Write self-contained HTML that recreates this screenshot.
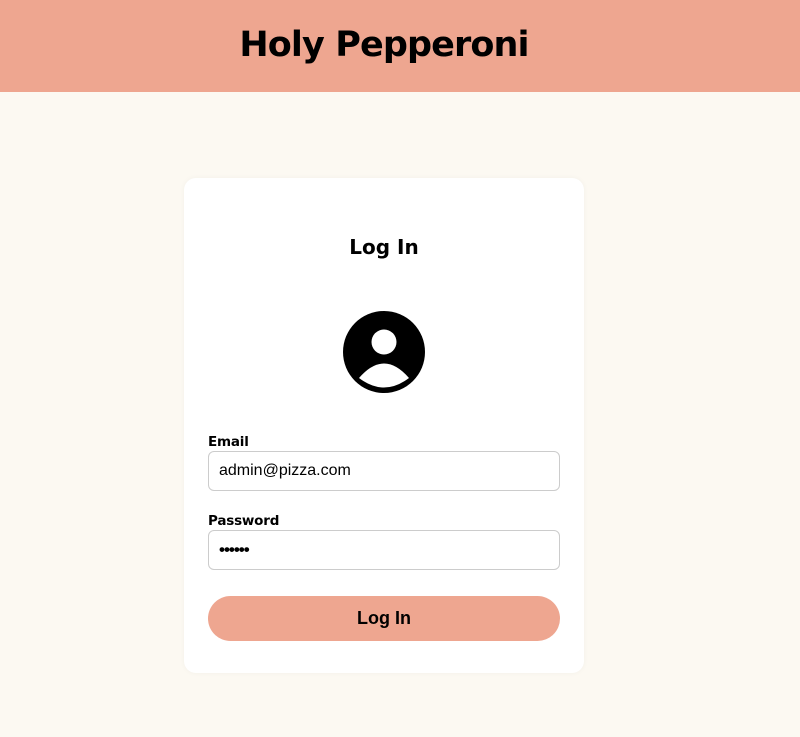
<!DOCTYPE html>
<html><head><style>
*{box-sizing:border-box;margin:0;padding:0}
body{width:800px;height:737px;background:#fcf9f2;font-family:"Liberation Sans",sans-serif;position:relative;overflow:hidden}
.hdr{position:absolute;left:0;top:0;width:800px;height:92px;background:#eea690}
.hdr h1{position:absolute;left:0;width:768px;text-align:center;top:20px;font-size:35px;line-height:50px;font-family:"DejaVu Sans","Liberation Sans",sans-serif;font-weight:bold;letter-spacing:-0.9px}
.card{position:absolute;left:184px;top:178px;width:400px;height:495px;background:#fff;border-radius:12px;box-shadow:0 0 6px rgba(0,0,0,0.04)}
.t{position:absolute;left:0;width:400px;text-align:center;top:235px;font-size:20px;font-weight:bold;font-family:"DejaVu Sans",sans-serif}
.lbl{position:absolute;left:208px;font-size:13.5px;font-weight:bold;font-family:"DejaVu Sans",sans-serif;letter-spacing:-0.2px}
.in{position:absolute;left:208px;width:352px;height:40px;border:1px solid #ccc;border-radius:6px;font-size:16px;padding-left:10px;line-height:38px;color:#000}
.btn{position:absolute;left:208px;top:596px;width:352px;height:45px;border-radius:23px;background:#eea690;text-align:center;line-height:45px;font-size:18px;font-weight:bold}
</style></head><body>
<div class="hdr"><h1>Holy Pepperoni</h1></div>
<div class="card"></div>
<div class="t" style="left:184px">Log In</div>
<svg style="position:absolute;left:342px;top:311px" width="84" height="84" viewBox="0 0 84 84">
<circle cx="42" cy="41" r="41" fill="#000"/>
<circle cx="42" cy="31" r="12.5" fill="#fff"/>
<path d="M17 67 Q42 38 67 67 Q42 86 17 67 Z" fill="#fff"/>
</svg>
<div class="lbl" style="top:434px">Email</div>
<div class="in" style="top:451px">admin@pizza.com</div>
<div class="lbl" style="top:513px">Password</div>
<div class="in" style="top:530px;font-size:17px;font-weight:bold;letter-spacing:-1px">••••••</div>
<div class="btn">Log In</div>
</body></html>
